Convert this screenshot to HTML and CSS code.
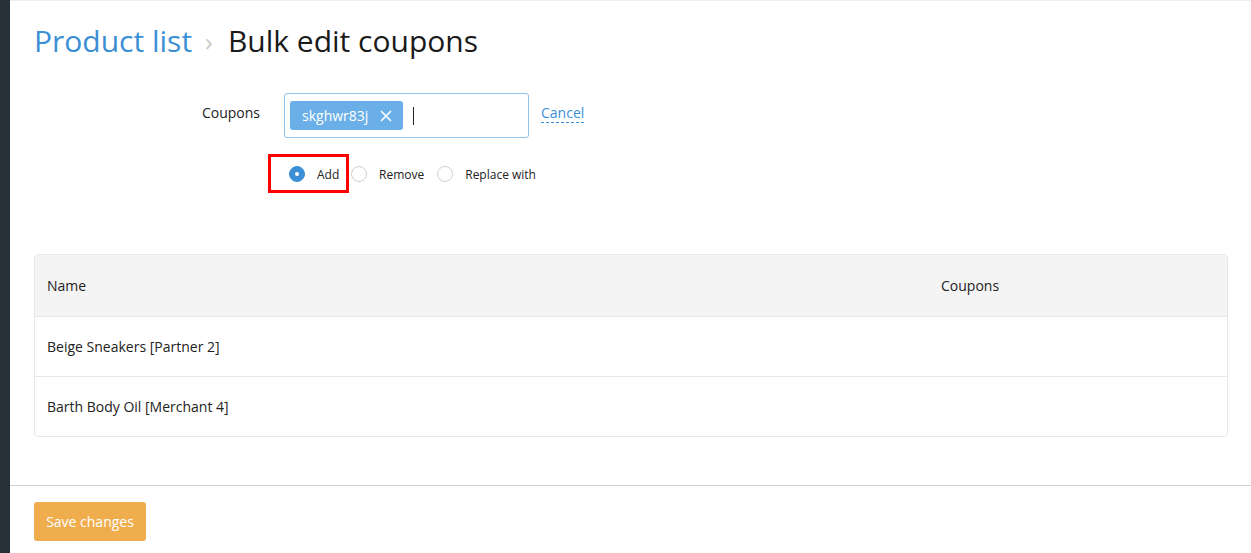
FILE: index.html
```html
<!DOCTYPE html>
<html>
<head>
<meta charset="utf-8">
<link rel="stylesheet" href="styles.css">
</head>
<body>
<div class="app">
  <aside class="sidebar"></aside>
  <main class="main">
    <div class="content">
      <h1 class="title"><a class="crumb">Product list</a><span class="sep">›</span><span class="current">Bulk edit coupons</span></h1>
      <div class="form">
        <div class="field">
          <label class="label">Coupons</label>
          <div class="tag-input">
            <span class="tag">skghwr83j<svg class="tag-x" width="12" height="12" viewBox="0 0 12 12"><path d="M1 1L11 11M11 1L1 11" stroke="#fff" stroke-width="1.6" fill="none"/></svg></span>
            <span class="caret"></span>
          </div>
          <a class="cancel">Cancel</a>
        </div>
        <div class="radios">
          <label class="radio highlight"><span class="dot checked"></span>Add</label>
          <label class="radio"><span class="dot"></span>Remove</label>
          <label class="radio"><span class="dot"></span>Replace with</label>
        </div>
      </div>
      <div class="table">
        <div class="row head"><div class="c-name">Name</div><div class="c-coupons">Coupons</div></div>
        <div class="row"><div class="c-name">Beige Sneakers [Partner 2]</div><div class="c-coupons"></div></div>
        <div class="row"><div class="c-name">Barth Body Oil [Merchant 4]</div><div class="c-coupons"></div></div>
      </div>
    </div>
    <footer class="footer">
      <button class="save">Save changes</button>
    </footer>
  </main>
</div>
</body>
</html>
```
FILE: styles.css
```css
* { box-sizing: border-box; }
html, body { margin: 0; padding: 0; height: 100%; }
body { font-family: "Open Sans", "Liberation Sans", sans-serif; color: #222; background: #fff; }
.app { display: flex; height: 553px; }
.sidebar { width: 10px; background: #253038; flex: none; }
.main { flex: 1; display: flex; flex-direction: column; border-top: 1px solid #eee; }
.content { flex: 1; padding: 0 23px 0 24px; }
.title { margin: 20px 0 0 0; font-size: 30px; font-weight: 400; line-height: 40px; display: flex; align-items: center; }
.crumb { color: #3b8fd5; }
.sep { color: #c8c8c8; font-size: 26px; margin: 0 15px 0 13px; }
.current { color: #1a1a1a; }
.form { margin-top: 32px; }
.field { display: flex; align-items: center; }
.label { width: 250px; text-align: right; padding-right: 24px; font-size: 14px; color: #222; margin-top: -6px; }
.tag-input { width: 245px; height: 45px; border: 1px solid #90c3ec; border-radius: 3px; display: flex; align-items: center; padding: 0 5px; }
.tag { background: #6aafe7; color: #fff; font-size: 14px; height: 29px; display: flex; align-items: center; padding: 0 11px 0 12px; border-radius: 3px; }
.tag-x { margin-left: 12px; }
.caret { width: 1px; height: 18px; background: #222; margin-left: 10px; }
.cancel { color: #3b8fd5; font-size: 14px; margin-left: 12px; margin-top: -4px; border-bottom: 1px dashed #3b8fd5; line-height: 18px; }
.radios { display: flex; align-items: center; margin: 16px 0 0 234px; font-size: 12px; color: #222; }
.radio { display: flex; align-items: center; height: 39px; margin-right: 13px; padding-top: 1px; }
.radio .dot { width: 16px; height: 16px; border-radius: 50%; border: 1px solid #cfcfcf; background: #fff; margin-right: 12px; }
.radio .dot.checked { background: #3b8fd5; border-color: #3b8fd5; position: relative; }
.radio .dot.checked::after { content: ""; position: absolute; left: 5px; top: 5px; width: 4px; height: 4px; border-radius: 50%; background: #fff; }
.radio.highlight { border: 3px solid #f00; padding: 1px 6px 0 18px; margin-left: 0; margin-right: 2px; width: 81px; }
.table { margin-top: 61px; border: 1px solid #e8e8e8; border-radius: 4px; overflow: hidden; font-size: 14px; }
.row { display: flex; height: 60px; align-items: center; border-top: 1px solid #e8e8e8; }
.row.head { background: #f4f4f4; border-top: none; height: 61px; }
.c-name { flex: 1; padding-left: 12px; }
.c-coupons { width: 298px; padding-left: 12px; }
.footer { border-top: 1px solid #d0d0d0; height: 68px; padding: 16px 24px; }
.save { background: #f0ad4e; color: #fff; border: none; border-radius: 3px; height: 39px; width: 112px; font-family: inherit; font-size: 14px; padding: 0; }
```
